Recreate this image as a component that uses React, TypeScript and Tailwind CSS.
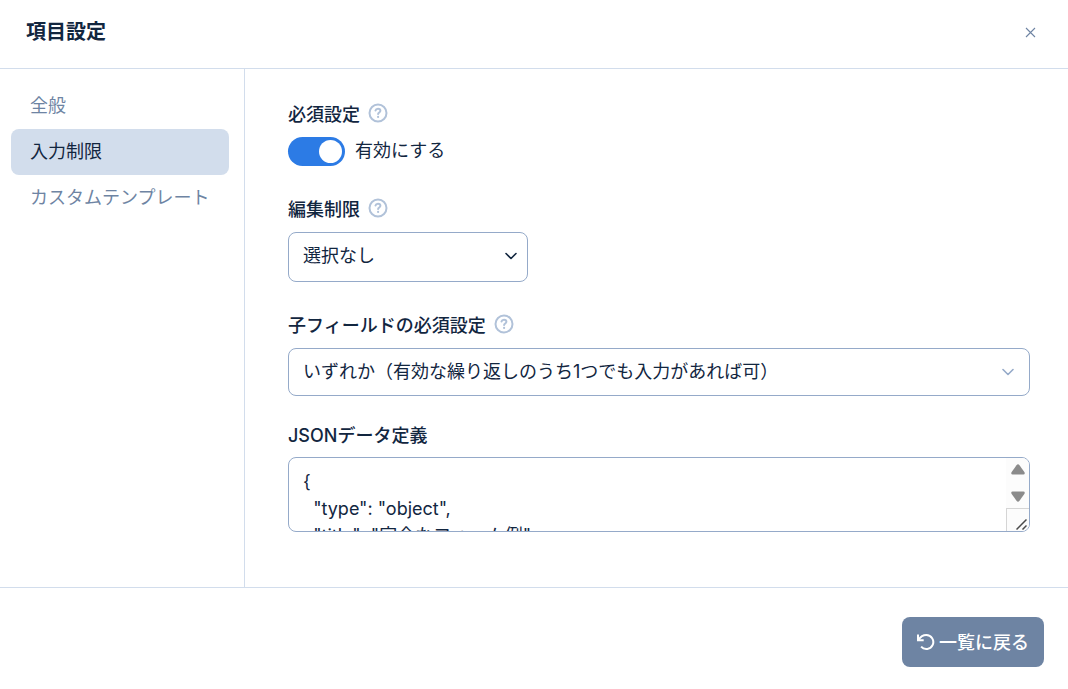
import { useState } from 'react';
import type { ReactNode } from 'react';

const TABS = ['全般', '入力制限', 'カスタムテンプレート'];

const SCHEMA = `{
  "type": "object",
  "title": "完全なフォーム例",
  "properties": {}
}`;

function HelpIcon() {
  return (
    <svg className="size-5" viewBox="0 0 20 20" fill="none" stroke="currentColor" strokeWidth="2" strokeLinecap="round" strokeLinejoin="round">
      <circle cx="10" cy="10" r="8.500" />
      <path d="M7.500 7.600c.3-1.200 1.300-1.800 2.500-1.800 1.400 0 2.400.8 2.400 2 0 1.600-2.200 1.700-2.300 3.200" />
      <path d="M10.100 13.900v.1" strokeWidth="2.2" />
    </svg>
  );
}

function Chevron({ className }: { className: string }) {
  return (
    <svg className={className} viewBox="0 0 12 8" fill="none" stroke="currentColor" strokeWidth="1.6" strokeLinecap="round" strokeLinejoin="round">
      <path d="M1 1.500l5 5 5-5" />
    </svg>
  );
}

function FieldLabel({ htmlFor, help, children }: { htmlFor: string; help?: boolean; children: ReactNode }) {
  return (
    <div className="flex h-7 items-center gap-2">
      <label htmlFor={htmlFor} className="pt-0.5 text-[18px] leading-7 font-medium">{children}</label>
      {help && (
        <button type="button" aria-label="ヘルプ" className="mb-0.5 text-[#b1c2d9]">
          <HelpIcon />
        </button>
      )}
    </div>
  );
}

export default function App() {
  const [tab, setTab] = useState('入力制限');
  const [required, setRequired] = useState(true);
  const [json, setJson] = useState(SCHEMA);

  return (
    <div className="flex min-h-screen flex-col bg-white font-['Inter','Noto_Sans_CJK_JP',sans-serif] text-[18px] text-[#12263f]">
      <header className="flex items-center justify-between border-b border-[#d2ddec] pt-4 pr-8 pb-5 pl-[26px]">
        <h1 className="text-xl leading-8 font-bold">項目設定</h1>
        <button type="button" aria-label="閉じる" className="text-[#6e84a3]">
          <svg className="size-[11px]" viewBox="0 0 11 11" fill="none" stroke="currentColor" strokeWidth="1.1">
            <path d="M1 1l9 9M10 1l-9 9" />
          </svg>
        </button>
      </header>

      <div className="flex grow">
        <nav className="w-[245px] shrink-0 border-r border-[#d2ddec] pt-[14px] pr-[15px] pl-[11px]">
          {TABS.map((name) => (
            <button
              key={name}
              type="button"
              onClick={() => setTab(name)}
              className={`block w-full rounded-lg px-[19px] py-[9px] text-left leading-7 whitespace-nowrap ${
                tab === name ? 'bg-[#d2ddec] text-[#12263f]' : 'text-[#6e84a3]'
              }`}
            >
              {name}
            </button>
          ))}
        </nav>

        <main className="min-w-0 grow pt-[31px] pr-[38px] pb-[55px] pl-[43px]">
          {/* 必須設定 */}
          <section className="mb-[29px]">
            <FieldLabel htmlFor="required" help>必須設定</FieldLabel>
            <div className="mt-[9px] flex items-center gap-[10px]">
              <input
                id="required"
                type="checkbox"
                role="switch"
                checked={required}
                onChange={(e) => setRequired(e.target.checked)}
                className="h-[29px] w-[57px] appearance-none rounded-full bg-[#b1c2d9] p-[3px] before:block before:size-[23px] before:rounded-full before:bg-white checked:bg-[#2c7be5] checked:before:ml-7"
              />
              <label htmlFor="required" className="pb-0.5 leading-6">有効にする</label>
            </div>
          </section>

          {/* 編集制限 */}
          <section className="mb-[29px]">
            <FieldLabel htmlFor="edit-limit" help>編集制限</FieldLabel>
            <div className="relative mt-[9px] w-60">
              <select id="edit-limit" className="h-[50px] w-full appearance-none rounded-lg border border-[#95aac9] bg-white pr-10 pb-1 pl-[14px]">
                <option>選択なし</option>
                <option>編集不可</option>
              </select>
              <Chevron className="pointer-events-none absolute top-5 right-[11px] h-2 w-3" />
            </div>
          </section>

          {/* 子フィールドの必須設定 */}
          <section className="mb-[25px]">
            <FieldLabel htmlFor="child-required" help>子フィールドの必須設定</FieldLabel>
            <div className="relative mt-[9px]">
              <select id="child-required" className="h-12 w-full appearance-none rounded-lg border border-[#95aac9] bg-white pr-10 pb-0.5 pl-[14px]">
                <option>いずれか（有効な繰り返しのうち1つでも入力があれば可）</option>
                <option>すべて</option>
              </select>
              <Chevron className="pointer-events-none absolute top-5 right-4 h-2 w-3 text-[#95aac9]" />
            </div>
          </section>

          {/* JSONデータ定義 */}
          <section>
            <FieldLabel htmlFor="json">JSONデータ定義</FieldLabel>
            <div className="mt-2 flex h-[75px] overflow-hidden rounded-lg border border-[#95aac9]">
              <textarea
                id="json"
                value={json}
                onChange={(e) => setJson(e.target.value)}
                spellCheck={false}
                className="min-w-0 grow resize-none overflow-hidden pt-[10px] pl-[14px] leading-[27px] outline-none"
              />
              <div aria-hidden="true" className="flex w-[23px] shrink-0 flex-col bg-[#fcfcfc]">
                <div className="flex grow flex-col items-center justify-between pt-[6px] pb-[6px] text-[#8b8b8b]">
                  <svg className="h-[11px] w-[14px]" viewBox="0 0 14 11" fill="currentColor">
                    <path d="M5.500 1.200Q7-.7 8.500 1.200L13.500 8.300Q14.300 10.500 12.300 10.500H1.700Q-.3 10.500.5 8.300Z" />
                  </svg>
                  <svg className="h-[11px] w-[14px] rotate-180" viewBox="0 0 14 11" fill="currentColor">
                    <path d="M5.500 1.200Q7-.7 8.500 1.200L13.500 8.300Q14.300 10.500 12.300 10.500H1.700Q-.3 10.500.5 8.300Z" />
                  </svg>
                </div>
                <div className="flex h-[23px] items-end justify-end border-t border-l border-[#d5d5d5] pr-[2px] pb-px">
                  <svg className="size-[11px]" viewBox="0 0 11 11" fill="none" stroke="#4a4a4a" strokeWidth="1.5">
                    <path d="M.5 10.500l10-10M6.500 10.500l4-4" />
                  </svg>
                </div>
              </div>
            </div>
          </section>
        </main>
      </div>

      <footer className="flex justify-end border-t border-[#d2ddec] pt-[29px] pr-6 pb-[22px]">
        <button type="button" className="flex h-[50px] items-center gap-1 rounded-lg bg-[#6e84a3] pr-[15px] pl-[14px] font-medium text-white">
          <svg className="size-[19px]" viewBox="0 0 19 19" fill="none" stroke="currentColor" strokeWidth="2">
            <path d="M2 1.500v5.700h5.700" />
            <path d="M2.500 6.700C4.600 3.500 7.300 2 10.300 2a7 7 0 1 1-5.200 11.700" />
          </svg>
          一覧に戻る
        </button>
      </footer>
    </div>
  );
}
